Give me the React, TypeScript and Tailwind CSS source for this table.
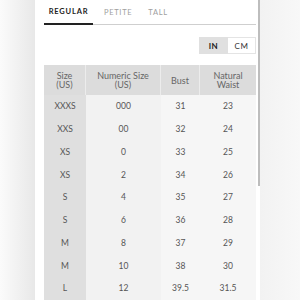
import React from 'react'

const rows = [
  ['XXXS', '000', '31', '23'],
  ['XXS', '00', '32', '24'],
  ['XS', '0', '33', '25'],
  ['XS', '2', '34', '26'],
  ['S', '4', '35', '27'],
  ['S', '6', '36', '28'],
  ['M', '8', '37', '29'],
  ['M', '10', '38', '30'],
  ['L', '12', '39.5', '31.5'],
]

export default function App() {
  return (
    <div
      className="flex h-[300px] w-[300px] overflow-hidden bg-white"
      style={{ fontFamily: 'Lato, "Open Sans", sans-serif' }}
    >
      {/* shadow left of the sheet */}
      <div className="h-full w-[35px] bg-gradient-to-r from-[#fbfbfb] to-[#e8e8e8]" />

      <div className="flex h-full w-[223px] flex-col bg-white pl-[9px] pr-[2px]">
        {/* tabs */}
        <div className="flex h-[27px] items-stretch border-b border-[#cfcfcf]">
          <div className="-mb-px flex w-[49px] items-center justify-center border-b-2 border-[#222] text-[7.5px] font-bold tracking-[0.8px] text-[#222]">
            REGULAR
          </div>
          <div className="ml-[11px] flex items-center text-[7.5px] tracking-[0.7px] text-[#a0a0a0]">
            PETITE
          </div>
          <div className="ml-[16px] flex items-center text-[7.5px] tracking-[0.7px] text-[#a0a0a0]">
            TALL
          </div>
        </div>

        {/* unit toggle */}
        <div className="mt-[12px] flex justify-end">
          <div className="flex h-[17px] text-[8px] tracking-[0.6px]">
            <div className="flex w-[29px] items-center justify-center bg-[#e0e0e0] font-bold text-[#222]">
              IN
            </div>
            <div className="flex w-[28px] items-center justify-center border border-l-0 border-[#e4e4e4] bg-white text-[#333]">
              CM
            </div>
          </div>
        </div>

        {/* size table */}
        <div className="mt-[11px] flex flex-col">
          <div className="flex h-[30px] bg-[#dcdcdc] text-[9px] leading-[9.5px] text-[#666]">
            <div className="flex w-[42px] items-center justify-center border-r border-[#ececec] text-center">
              Size
              <br />
              (US)
            </div>
            <div className="flex w-[75px] items-center justify-center border-r border-[#ececec] text-center">
              Numeric Size
              <br />
              (US)
            </div>
            <div className="flex w-[39px] items-center justify-center border-r border-[#ececec] text-center">
              Bust
            </div>
            <div className="flex flex-1 items-center justify-center text-center">
              Natural
              <br />
              Waist
            </div>
          </div>
          {rows.map((r, i) => (
            <div key={i} className="flex h-[22.75px] text-[8.5px] text-[#555]">
              <div className="flex w-[42px] items-center justify-center bg-[#dfdfdf]">{r[0]}</div>
              <div className="flex w-[75px] items-center justify-center bg-[#f2f2f2]">{r[1]}</div>
              <div className="flex w-[39px] items-center justify-center bg-[#f6f6f6]">{r[2]}</div>
              <div className="flex flex-1 items-center justify-center bg-[#f6f6f6]">{r[3]}</div>
            </div>
          ))}
        </div>
      </div>

      {/* scrollbar */}
      <div className="flex h-full w-[2px] flex-col bg-white">
        <div className="h-[186px] w-full bg-[#bdbdbd]" />
      </div>

      <div className="h-full flex-1 bg-gradient-to-r from-[#f2f2f2] to-[#f8f8f8]" />
    </div>
  )
}
